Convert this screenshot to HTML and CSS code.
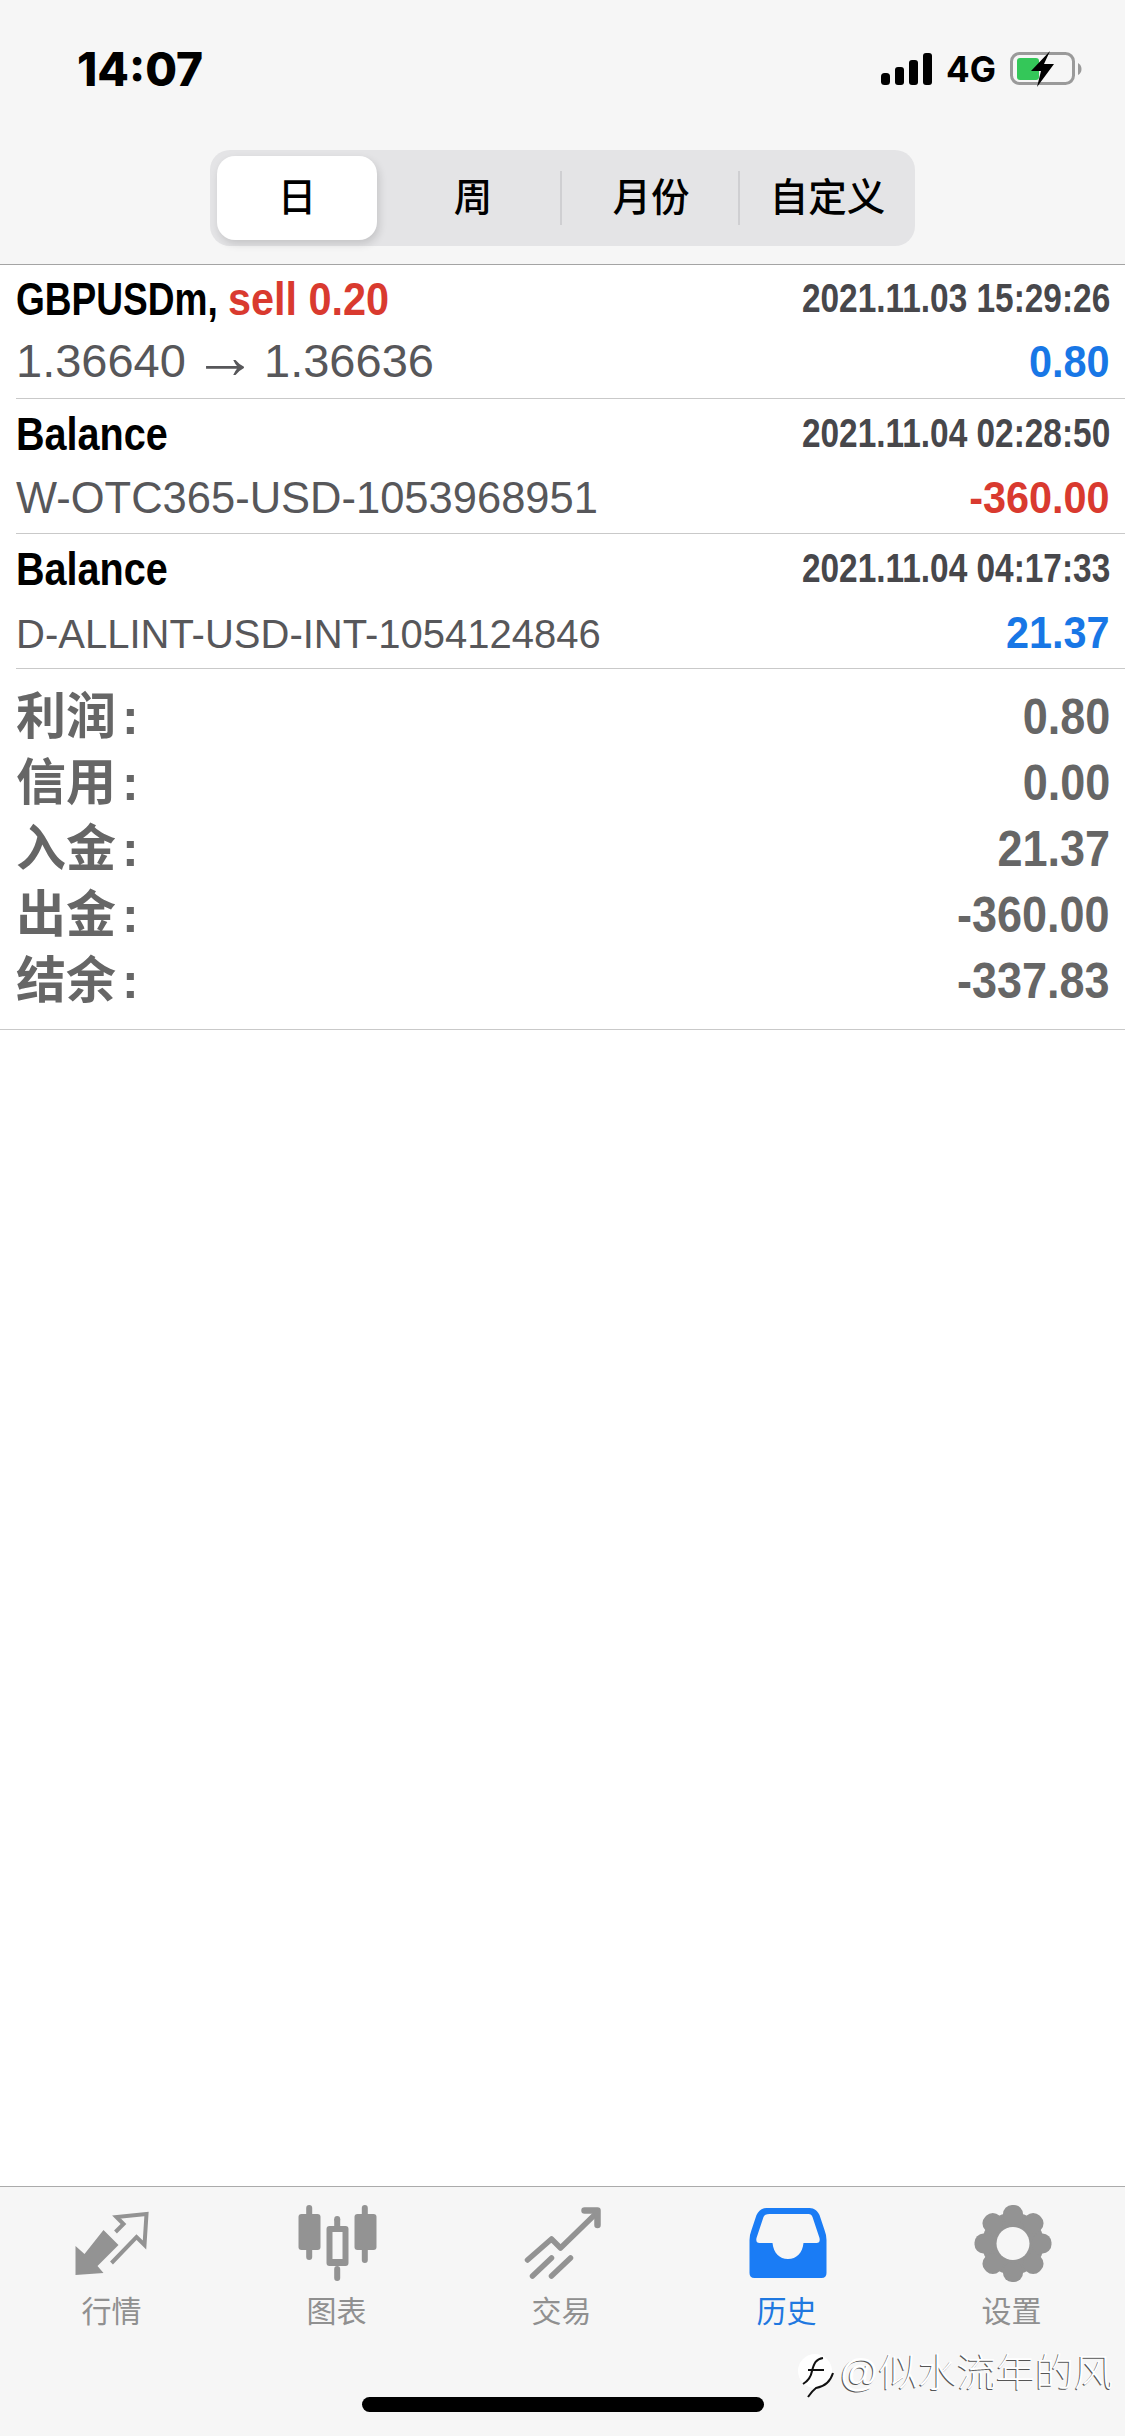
FILE: index.html
```html
<!DOCTYPE html>
<html lang="zh">
<head>
  <meta charset="UTF-8" />
  <title>历史</title>
  <meta name="viewport" content="width=device-width, initial-scale=1" />
  <link rel="stylesheet" href="styles.css">
</head>
<body>

  <div class="top">
    <div class="status">
      <div class="time">14:07</div>
      <div class="status-right">
        <svg class="signal" width="51" height="32" viewBox="0 0 51 32">
          <rect x="0" y="20" width="9" height="12" rx="3.5" />
          <rect x="14" y="14" width="9" height="18" rx="3" />
          <rect x="28" y="7" width="9" height="25" rx="3" />
          <rect x="42" y="0" width="9" height="32" rx="3" />
        </svg>
        <span class="net">4G</span>
        <svg class="battery" width="72" height="36" viewBox="0 0 72 36">
          <rect x="1.500" y="2.500" width="62" height="30" rx="8" fill="none" stroke="#9a9a9a" stroke-width="3" />
          <rect x="7" y="7" width="22" height="22" rx="3" fill="#34c759" />
          <path d="M68 12 Q71.500 14 71.500 18 Q71.500 22 68 24 Z" fill="#9a9a9a" />
          <path d="M40 0 L21 20 H31 L27 36 L44 13 H34 Z" fill="#000" />
        </svg>
      </div>
    </div>
    <div class="segments">
      <div class="seg seg-on">日</div>
      <div class="seg seg-week">周</div>
      <div class="seg seg-line">月份</div>
      <div class="seg">自定义</div>
    </div>
  </div>

  <div class="list">
    <div class="row">
      <div class="line">
        <span class="title"><span class="fit symbol">GBPUSDm,</span><span class="fit side red">sell 0.20</span></span>
        <span class="fit-r date">2021.11.03 15:29:26</span>
      </div>
      <div class="line">
        <span class="detail">1.36640 <span class="arrow">→</span> 1.36636</span>
        <span class="fit-r amount blue">0.80</span>
      </div>
    </div>
    <div class="row">
      <div class="line">
        <span class="fit title">Balance</span>
        <span class="fit-r date">2021.11.04 02:28:50</span>
      </div>
      <div class="line">
        <span class="detail detail-md">W-OTC365-USD-1053968951</span>
        <span class="fit-r amount red">-360.00</span>
      </div>
    </div>
    <div class="row">
      <div class="line">
        <span class="fit title">Balance</span>
        <span class="fit-r date">2021.11.04 04:17:33</span>
      </div>
      <div class="line">
        <span class="detail detail-sm">D-ALLINT-USD-INT-1054124846</span>
        <span class="fit-r amount blue">21.37</span>
      </div>
    </div>
  </div>

  <div class="summary">
    <div class="sum-row"><span class="sum-label">利润<i>:</i></span><span class="fit-r sum-val">0.80</span></div>
    <div class="sum-row"><span class="sum-label">信用<i>:</i></span><span class="fit-r sum-val">0.00</span></div>
    <div class="sum-row"><span class="sum-label">入金<i>:</i></span><span class="fit-r sum-val">21.37</span></div>
    <div class="sum-row"><span class="sum-label">出金<i>:</i></span><span class="fit-r sum-val">-360.00</span></div>
    <div class="sum-row"><span class="sum-label">结余<i>:</i></span><span class="fit-r sum-val">-337.83</span></div>
  </div>

  <div class="spacer"></div>

  <div class="tabbar">
    <div class="tabs">
      <div class="tab">
        <svg width="80" height="80" viewBox="0 0 80 80">
          <g transform="translate(2.500 7)">
            <path d="M0 64 V35 L9 43 L28 19 L43 34 L22 55 L28 62 Z" fill="#939393" />
            <path d="M40 21 L48 13 L41 6 L71 3 L69 34 L61 26 L36 52" fill="none" stroke="#939393" stroke-width="4" />
          </g>
        </svg>
        <span>行情</span>
      </div>
      <div class="tab">
        <svg width="80" height="80" viewBox="0 0 80 80">
          <g transform="translate(.5 1)" fill="#939393">
            <rect x="7.700" y="0" width="6" height="55" rx="3" />
            <rect x="0" y="9" width="22" height="36" rx="3" />
            <path fill-rule="evenodd" d="M31 21 H47 Q50 21 50 24 V58 Q50 61 47 61 H31 Q28 61 28 58 V24 Q28 21 31 21 Z M34 27 V54 H44 V27 Z" />
            <rect x="35.700" y="14" width="6" height="7" />
            <rect x="35.700" y="61" width="6" height="15" rx="3" />
            <rect x="35.700" y="11" width="6" height="6" rx="3" />
            <rect x="63.300" y="0" width="6" height="58" rx="3" />
            <rect x="56" y="9" width="22" height="36" rx="3" />
          </g>
        </svg>
        <span>图表</span>
      </div>
      <div class="tab">
        <svg width="80" height="80" viewBox="0 0 80 80">
          <g transform="translate(1.500 3)" fill="none" stroke="#939393" stroke-width="5.500" stroke-linecap="round" stroke-linejoin="round">
            <path d="M3 53 L27 32 L36 41 L71 7" />
            <path d="M60 3.500 H73 V18" stroke-width="6.500" />
            <path d="M8 69 L27 51" />
            <path d="M27 69 L46 51" />
          </g>
        </svg>
        <span>交易</span>
      </div>
      <div class="tab tab-on">
        <svg width="80" height="80" viewBox="0 0 80 80">
          <path transform="translate(1.500 4)" fill="#1a7cf5" fill-rule="evenodd" d="M17 0 H60 C65 0 68 3 70 7 L75 22 Q77 27 77 32 V65 Q77 70 72 70 H5 Q0 70 0 65 V32 Q0 27 2 22 L7 7 C9 3 12 0 17 0 Z M20 6 Q15 6 14 9 L7 30 Q6 35 10 35 H23 C24 45 30 51 38.500 51 C47 51 53 45 54 35 H67 Q71 35 70 30 L63 9 Q62 6 59 6 Z" />
        </svg>
        <span>历史</span>
      </div>
      <div class="tab">
        <svg width="80" height="80" viewBox="0 0 80 80">
          <g transform="translate(40 39.500)" fill="#939393">
            <circle r="31" />
            <rect x="-10" y="-38.500" width="20" height="20" rx="9" />
            <rect x="-10" y="-38.500" width="20" height="20" rx="9" transform="rotate(45)" />
            <rect x="-10" y="-38.500" width="20" height="20" rx="9" transform="rotate(90)" />
            <rect x="-10" y="-38.500" width="20" height="20" rx="9" transform="rotate(135)" />
            <rect x="-10" y="-38.500" width="20" height="20" rx="9" transform="rotate(180)" />
            <rect x="-10" y="-38.500" width="20" height="20" rx="9" transform="rotate(225)" />
            <rect x="-10" y="-38.500" width="20" height="20" rx="9" transform="rotate(270)" />
            <rect x="-10" y="-38.500" width="20" height="20" rx="9" transform="rotate(315)" />
            <circle r="16.500" fill="#f6f6f6" />
          </g>
        </svg>
        <span>设置</span>
      </div>
    </div>
    <div class="home-bar"></div>

    <div class="watermark">
      <svg width="40" height="46" viewBox="0 0 40 46">
        <circle cx="19" cy="18" r="17" fill="#fff" />
        <g fill="none" stroke="#111" stroke-width="2">
          <path d="M27 5 C20 6 18 10 16 18 C15 24 12 28 7 31" />
          <path d="M12 17 H28" />
          <path d="M37 20 C34 30 26 34 20 35 C16 38 14 41 12 44" />
        </g>
      </svg>
      <span>@似水流年的风</span>
    </div>
  </div>

</body>
</html>
```

FILE: styles.css
```css
* {
  box-sizing: border-box;
  margin: 0;
  padding: 0;
}

body {
  font-family: 'Liberation Sans', 'Noto Sans CJK SC', sans-serif;
  background: #fff;
  color: #000;
  width: 1125px;
  height: 100vh;
  display: flex;
  flex-direction: column;
  overflow: hidden;
}

.top {
  background: #f6f6f6;
  border-bottom: 1px solid #a4a4a4;
  padding-bottom: 18px;
}

.status {
  height: 138px;
  padding: 0 43px 0 77px;
  display: flex;
  justify-content: space-between;
  align-items: center;
}

.time {
  font-family: Inter, sans-serif;
  font-size: 46px;
  font-weight: 800;
}

.status-right {
  display: flex;
  align-items: center;
}

.net {
  font-family: Inter, sans-serif;
  font-size: 35px;
  font-weight: 700;
  margin: 0 14px;
}

.segments {
  width: 705px;
  height: 96px;
  margin: 12px auto 0;
  padding: 6px 0 6px 7px;
  background: #e4e4e6;
  border-radius: 20px;
  display: grid;
  grid-template-columns: 160px 185px 178px 175px;
  align-items: center;
}

.seg {
  height: 54px;
  line-height: 54px;
  text-align: center;
  font-size: 38.5px;
  font-weight: 500;
}

.seg-on {
  height: 84px;
  line-height: 84px;
  background: #fff;
  border-radius: 18px;
  box-shadow: 2px 4px 8px rgba(0, 0, 0, 0.14);
}

.seg-week {
  padding-left: 9px;
  border-right: 2px solid #cfcfd2;
}

.seg-line {
  padding-left: 2px;
  border-right: 2px solid #cfcfd2;
}

.row {
  height: 135px;
  margin-left: 16px;
  padding: 4px 15px 0 0;
  border-bottom: 1px solid #c9c9c9;
}

.row:first-child {
  height: 134px;
  padding-top: 3px;
}

.line {
  height: 62px;
  display: flex;
  justify-content: space-between;
  align-items: baseline;
  line-height: 62px;
  white-space: nowrap;
}

.row + .row .line + .line {
  margin-top: 1.5px;
}

/* the app squeezes its bold numbers and titles, so keep the height and pull the width in */
.fit {
  display: inline-block;
  transform: scaleX(0.86);
  transform-origin: left center;
}

.fit-r {
  display: inline-block;
  transform: scaleX(0.92);
  transform-origin: right center;
}

.title {
  font-size: 46px;
  font-weight: 700;
}

.symbol {
  transform: scaleX(0.806);
  margin-right: -38px;
}

.side {
  transform: scaleX(0.9);
}

.date {
  font-size: 40px;
  font-weight: 700;
  color: #47474b;
  transform: translateY(-3px) scaleX(0.835);
}

.detail {
  font-size: 47px;
  color: #57575a;
}

.arrow {
  font-size: 64px;
  line-height: 0;
  vertical-align: -1px;
  margin: 0 -6px;
}

.detail-md {
  font-size: 43.5px;
}

.detail-sm {
  font-size: 40px;
}

.amount {
  font-size: 45px;
  font-weight: 700;
}

.red {
  color: #d93a2f;
}

.blue {
  color: #1877e6;
}

.summary {
  padding: 15px 15px 15px 16px;
  border-bottom: 1px solid #c9c9c9;
  color: #666;
  font-weight: 700;
  font-size: 50px;
}

.sum-row {
  height: 66px;
  display: flex;
  justify-content: space-between;
  align-items: center;
}

.sum-label {
  padding-bottom: 10px;
}

.sum-label i {
  font-style: normal;
  margin-left: 6px;
}

.sum-val {
  transform: scaleX(0.9);
}

.spacer {
  flex: 1;
}

.tabbar {
  position: relative;
  height: 250px;
  background: #f6f6f6;
  border-top: 1px solid #ababab;
}

.tabs {
  display: grid;
  grid-template-columns: repeat(5, 1fr);
  padding-top: 17px;
}

.tab {
  display: flex;
  flex-direction: column;
  align-items: center;
  font-size: 30px;
  line-height: 30px;
  color: #909090;
}

.tab span {
  margin: 13px 2px 0 0;
}

.tab-on {
  color: #1f78e0;
}

.home-bar {
  width: 402px;
  height: 15px;
  margin: 70px auto 0;
  background: #000;
  border-radius: 8px;
}

.watermark {
  position: absolute;
  top: 166px;
  right: 12px;
  display: flex;
  align-items: flex-start;
  gap: 3px;
  font-size: 39px;
  font-weight: 300;
  line-height: 40px;
  color: #fff;
  text-shadow: -1px 1px 0 #555;
}
```
